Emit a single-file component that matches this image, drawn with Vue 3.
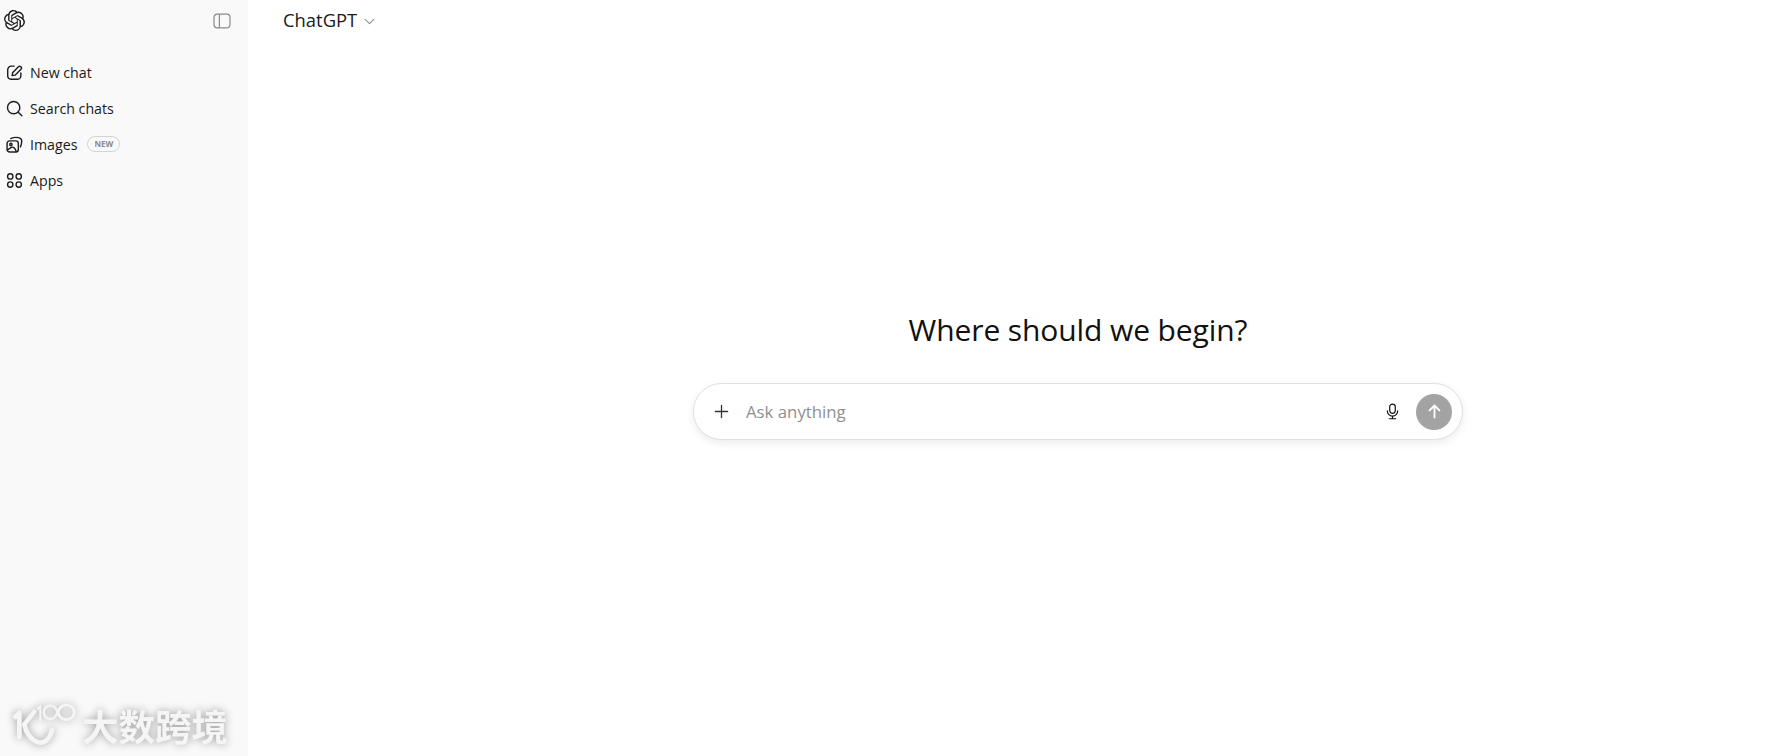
<script setup>
const navItems = [
  { label: 'New chat', icon: 'edit' },
  { label: 'Search chats', icon: 'search' },
  { label: 'Images', icon: 'images', badge: 'NEW' },
  { label: 'Apps', icon: 'apps' },
]
</script>

<template>
  <div class="page">
    <aside class="sidebar">
      <div class="side-top">
        <svg class="logo" viewBox="0 0 24 24" fill="#1a1a1a">
          <path d="M22.2819 9.8211a5.9847 5.9847 0 0 0-.5157-4.9108 6.0462 6.0462 0 0 0-6.5098-2.9A6.0651 6.0651 0 0 0 4.9807 4.1818a5.9847 5.9847 0 0 0-3.9977 2.9 6.0462 6.0462 0 0 0 .7427 7.0966 5.98 5.98 0 0 0 .511 4.9107 6.051 6.051 0 0 0 6.5146 2.9001A5.9847 5.9847 0 0 0 13.2599 24a6.0557 6.0557 0 0 0 5.7718-4.2058 5.9894 5.9894 0 0 0 3.9977-2.9001 6.0557 6.0557 0 0 0-.7475-7.0729zm-9.022 12.6081a4.4755 4.4755 0 0 1-2.8764-1.0408l.1419-.0804 4.7783-2.7582a.7948.7948 0 0 0 .3927-.6813v-6.7369l2.02 1.1686a.071.071 0 0 1 .038.052v5.5826a4.504 4.504 0 0 1-4.4945 4.4944zm-9.6607-4.1254a4.4708 4.4708 0 0 1-.5346-3.0137l.142.0852 4.783 2.7582a.7712.7712 0 0 0 .7806 0l5.8428-3.3685v2.3324a.0804.0804 0 0 1-.0332.0615L9.74 19.9502a4.4992 4.4992 0 0 1-6.1408-1.6464zM2.3408 7.8956a4.485 4.485 0 0 1 2.3655-1.9728V11.6a.7664.7664 0 0 0 .3879.6765l5.8144 3.3543-2.0201 1.1685a.0757.0757 0 0 1-.071 0l-4.8303-2.7865A4.504 4.504 0 0 1 2.3408 7.872zm16.5963 3.8558L13.1038 8.364 15.1192 7.2a.0757.0757 0 0 1 .071 0l4.8303 2.7913a4.4944 4.4944 0 0 1-.6765 8.1042v-5.6772a.79.79 0 0 0-.407-.667zm2.0107-3.0231l-.142-.0852-4.7735-2.7818a.7759.7759 0 0 0-.7854 0L9.409 9.2297V6.8974a.0662.0662 0 0 1 .0284-.0615l4.8303-2.7866a4.4992 4.4992 0 0 1 6.6802 4.66zM8.3065 12.863l-2.02-1.1638a.0804.0804 0 0 1-.038-.0567V6.0742a4.4992 4.4992 0 0 1 7.3757-3.4537l-.142.0805L8.704 5.459a.7948.7948 0 0 0-.3927.6813zm1.0976-2.3654l2.602-1.4998 2.6069 1.4998v2.9994l-2.5974 1.4997-2.6067-1.4997Z" />
        </svg>
        <svg class="toggle" viewBox="0 0 18 16" fill="none" stroke="#8a8a8a" stroke-width="1.2">
          <rect x="1" y="1.2" width="16" height="13.6" rx="3.4" />
          <path d="M6.4 1.2v13.6" />
        </svg>
      </div>

      <nav class="nav">
        <div v-for="item in navItems" :key="item.label" class="nav-item">
          <svg class="nav-icon" viewBox="0 0 16 16" fill="none" stroke="#1f1f1f" stroke-width="1.35" stroke-linecap="round" stroke-linejoin="round">
            <template v-if="item.icon === 'edit'">
              <path d="M7.6 2H5a3.4 3.4 0 0 0-3.4 3.4v6A3 3 0 0 0 4.6 14.4h6a3.4 3.4 0 0 0 3.4-3.4V8.4" />
              <path d="M6.2 8.3 11.7 2.6a1.7 1.7 0 0 1 2.4 2.4L8.5 10.5l-2.7.4z" />
            </template>
            <template v-else-if="item.icon === 'search'">
              <circle cx="7.2" cy="7.2" r="5.8" />
              <path d="m11.5 11.5 3.4 3.4" />
            </template>
            <template v-else-if="item.icon === 'images'">
              <rect x="1" y="4.6" width="10.6" height="10.4" rx="2.4" />
              <path d="M4.4 2.4c2-.9 5-1.3 7.4-.9 2 .4 3 1.4 3 3.2 0 2-.4 4-1.2 5.6" />
              <circle cx="4.6" cy="8" r="1.1" />
              <path d="M1.4 13 5 10.8c1.4-.9 3.6.2 4.6 3.8" />
            </template>
            <template v-else>
              <circle cx="4" cy="4.2" r="2.5" />
              <circle cx="12" cy="4.2" r="2.5" />
              <circle cx="4" cy="11.8" r="2.5" />
              <circle cx="12" cy="11.8" r="2.5" />
            </template>
          </svg>
          <span class="nav-label">{{ item.label }}</span>
          <span v-if="item.badge" class="badge">{{ item.badge }}</span>
        </div>
      </nav>

      <div class="watermark">
        <svg class="wm-logo" viewBox="0 0 225 165" fill="none" stroke="#f5f5f5" stroke-linecap="round" stroke-linejoin="round">
          <path d="M25 66 37 54v72" stroke-width="14" />
          <path d="M82 50 52 88" stroke-width="13" />
          <path d="M52 88c8 50 65 85 83 17" stroke-width="14" />
          <path d="M92 42l8-8v42" stroke-width="6" />
          <circle cx="130" cy="52" r="20" stroke-width="7" />
          <ellipse cx="178" cy="52" rx="24" ry="22" stroke-width="8" />
        </svg>
        <span class="wm-text">大数跨境</span>
      </div>
    </aside>

    <main class="main">
      <header class="topbar">
        <span class="model">ChatGPT</span>
        <svg class="chevron" viewBox="0 0 12 8" fill="none" stroke="#8f8f8f" stroke-width="1.2" stroke-linecap="round" stroke-linejoin="round">
          <path d="m1 1.5 5 5 5-5" />
        </svg>
      </header>

      <section class="stage">
        <h1 class="title">Where should we begin?</h1>
        <div class="composer">
          <svg class="plus" viewBox="0 0 16 16" fill="none" stroke="#333" stroke-width="1.4" stroke-linecap="round">
            <path d="M8 1.5v13M1.5 8h13" />
          </svg>
          <span class="placeholder">Ask anything</span>
          <svg class="mic" viewBox="0 0 14 18" fill="none" stroke="#111" stroke-width="1.3" stroke-linecap="round">
            <rect x="4" y="1" width="6" height="10" rx="3" />
            <path d="M1.4 8.4a5.6 5.6 0 0 0 11.2 0M7 14v2.6M3.6 16.8h6.8" />
          </svg>
          <button class="send">
            <svg viewBox="0 0 14 14" fill="none" stroke="#fff" stroke-width="1.7" stroke-linecap="round" stroke-linejoin="round">
              <path d="M7 12.6V1.6M2.4 6 7 1.4 11.6 6" />
            </svg>
          </button>
        </div>
      </section>
    </main>
  </div>
</template>

<style>
html,
body {
  margin: 0;
  background: #fff;
}
</style>

<style scoped>
.page {
  display: flex;
  width: 1770px;
  height: 756px;
  overflow: hidden;
  font-family: "Open Sans", "Noto Sans", sans-serif;
  color: #1a1a1a;
}

.sidebar {
  position: relative;
  width: 248px;
  flex-shrink: 0;
  background: #f9f9f9;
  box-sizing: border-box;
  padding-top: 10px;
}

.side-top {
  display: flex;
  justify-content: space-between;
  align-items: center;
  padding: 0 17px 0 4px;
  height: 21px;
}

.logo {
  width: 21px;
  height: 21px;
}

.toggle {
  width: 18px;
  height: 16px;
}

.nav {
  margin-top: 23px;
}

.nav-item {
  display: flex;
  align-items: center;
  height: 36px;
  padding-left: 6px;
}

.nav-icon {
  width: 17px;
  height: 17px;
  margin-right: 7px;
  flex-shrink: 0;
}

.nav-label {
  font-size: 14.2px;
}

.badge {
  margin-left: 10px;
  border: 1px solid #d4d4d4;
  border-radius: 8px;
  padding: 0 6px;
  height: 14px;
  line-height: 14px;
  font-size: 8px;
  font-weight: 700;
  color: #8a8a8a;
}

.watermark {
  position: absolute;
  left: 7px;
  bottom: 6px;
  display: flex;
  align-items: flex-end;
  filter: drop-shadow(0 0 4px rgba(0, 0, 0, 0.38));
}

.wm-logo {
  width: 75px;
  height: 55px;
}

.wm-text {
  margin-bottom: 5px;
  font-family: "Noto Sans CJK SC", sans-serif;
  font-size: 36.5px;
  line-height: 38px;
  font-weight: 700;
  color: #f5f5f5;
}

.main {
  flex: 1;
  display: flex;
  flex-direction: column;
  background: #fff;
}

.topbar {
  display: flex;
  align-items: center;
  height: 39px;
  padding-left: 35px;
}

.model {
  font-size: 18.4px;
  color: #1a1a1a;
}

.chevron {
  width: 11px;
  height: 7px;
  margin: 3px 0 0 7px;
}

.stage {
  display: flex;
  flex-direction: column;
  align-items: center;
  padding: 267px 0 0 138px;
}

.title {
  margin: 0 0 30px;
  font-size: 30px;
  letter-spacing: -0.1px;
  line-height: 47px;
  font-weight: 400;
  color: #111;
}

.composer {
  display: flex;
  align-items: center;
  width: 770px;
  height: 57px;
  box-sizing: border-box;
  border: 1px solid #e0e0e0;
  border-radius: 29px;
  padding: 0 10px 0 20px;
  background: #fff;
  box-shadow: 0 3px 8px rgba(0, 0, 0, 0.08);
}

.plus {
  width: 15px;
  height: 15px;
  flex-shrink: 0;
}

.placeholder {
  flex: 1;
  margin-left: 17px;
  font-size: 16.8px;
  color: #8f8f8f;
}

.mic {
  width: 13px;
  height: 17px;
  margin-right: 17px;
}

.send {
  display: flex;
  align-items: center;
  justify-content: center;
  width: 36px;
  height: 36px;
  padding: 0;
  border: 0;
  border-radius: 50%;
  background: #a3a3a3;
}

.send svg {
  width: 15px;
  height: 15px;
}
</style>
